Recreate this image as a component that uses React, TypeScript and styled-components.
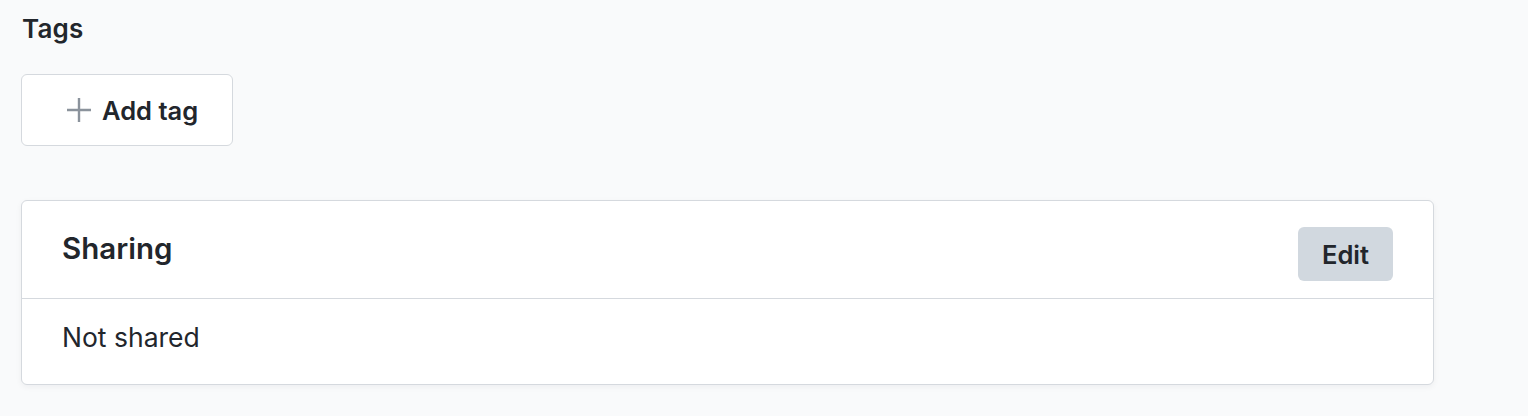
import React from 'react';
import styled, { createGlobalStyle } from 'styled-components';

const GlobalStyle = createGlobalStyle`
  html, body {
    margin: 0;
    padding: 0;
    background: #f9fafb;
  }
  body {
    font-family: Inter, "Noto Sans", "Liberation Sans", sans-serif;
    color: #22262c;
  }
`;

const Page = styled.div`
  display: flex;
  flex-direction: column;
  padding: 11px 94px 0 21px;
  height: 416px;
  box-sizing: border-box;
`;

const SectionTitle = styled.h3`
  margin: 0 0 0 1px;
  font-size: 26px;
  line-height: 36px;
  font-weight: 600;
  letter-spacing: 0.2px;
`;

const AddTagButton = styled.button`
  display: inline-flex;
  align-items: center;
  gap: 10px;
  align-self: flex-start;
  width: 212px;
  height: 72px;
  margin-top: 27px;
  padding: 0 0 0 44px;
  box-sizing: border-box;
  background: #ffffff;
  border: 1px solid #d5d9de;
  border-radius: 6px;
  font-family: inherit;
  font-size: 25.5px;
  font-weight: 600;
  color: #22262c;
  cursor: pointer;
`;

const Card = styled.section`
  margin-top: 54px;
  background: #ffffff;
  border: 1px solid #d5d9de;
  border-radius: 6px;
  box-shadow: 0 2px 6px rgba(16, 24, 40, 0.05);
`;

const CardHeader = styled.header`
  display: flex;
  justify-content: space-between;
  align-items: flex-start;
  padding: 26px 40px 17px 40px;
  border-bottom: 1px solid #d5d9de;
`;

const CardTitle = styled.h2`
  margin: 0;
  font-size: 29.5px;
  line-height: 42px;
  font-weight: 600;
`;

const EditButton = styled.button`
  width: 95px;
  height: 54px;
  border: none;
  border-radius: 6px;
  background: #d1d8df;
  font-family: inherit;
  font-size: 25.5px;
  font-weight: 600;
  color: #22262c;
  cursor: pointer;
`;

const CardBody = styled.div`
  padding: 22px 40px 31px 40px;
  font-size: 26.5px;
  line-height: 32px;
`;

const PlusIcon = () => (
  <svg width="26" height="26" viewBox="0 0 26 26" fill="none" stroke="#8b939c" strokeWidth="2.4">
    <path d="M13 1v24M1 13h24" />
  </svg>
);

export default function App() {
  return (
    <>
      <GlobalStyle />
      <Page>
        <SectionTitle>Tags</SectionTitle>
        <AddTagButton>
          <PlusIcon />
          Add tag
        </AddTagButton>
        <Card>
          <CardHeader>
            <CardTitle>Sharing</CardTitle>
            <EditButton>Edit</EditButton>
          </CardHeader>
          <CardBody>Not shared</CardBody>
        </Card>
      </Page>
    </>
  );
}
